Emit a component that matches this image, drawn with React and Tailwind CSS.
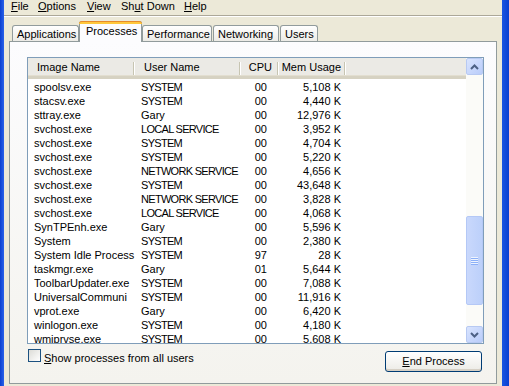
import React from "react";

const rows = [
  ["spoolsv.exe", "SYSTEM", "00", "5,108 K"],
  ["stacsv.exe", "SYSTEM", "00", "4,440 K"],
  ["sttray.exe", "Gary", "00", "12,976 K"],
  ["svchost.exe", "LOCAL SERVICE", "00", "3,952 K"],
  ["svchost.exe", "SYSTEM", "00", "4,704 K"],
  ["svchost.exe", "SYSTEM", "00", "5,220 K"],
  ["svchost.exe", "NETWORK SERVICE", "00", "4,656 K"],
  ["svchost.exe", "SYSTEM", "00", "43,648 K"],
  ["svchost.exe", "NETWORK SERVICE", "00", "3,828 K"],
  ["svchost.exe", "LOCAL SERVICE", "00", "4,068 K"],
  ["SynTPEnh.exe", "Gary", "00", "5,596 K"],
  ["System", "SYSTEM", "00", "2,380 K"],
  ["System Idle Process", "SYSTEM", "97", "28 K"],
  ["taskmgr.exe", "Gary", "01", "5,644 K"],
  ["ToolbarUpdater.exe", "SYSTEM", "00", "7,088 K"],
  ["UniversalCommuni", "SYSTEM", "00", "11,916 K"],
  ["vprot.exe", "Gary", "00", "6,420 K"],
  ["winlogon.exe", "SYSTEM", "00", "4,180 K"],
  ["wmiprvse.exe", "SYSTEM", "00", "5,608 K"],
];

const font = { fontFamily: '"Liberation Sans", Arial, sans-serif' };

const MenuItem = ({ u, rest, pre = "", w }) => (
  <span className={`${w} shrink-0 whitespace-nowrap`}>
    {pre}
    <span className="underline underline-offset-1">{u}</span>
    {rest}
  </span>
);

const Tab = ({ label, w, selected }) =>
  selected ? (
    <div
      className={`relative z-10 -mb-px h-[21px] ${w} rounded-t-[3px] border border-b-0 border-[#919B9C] bg-[#FCFCFE] flex flex-col`}
    >
      <div className="h-[3px] -mx-px -mt-px rounded-t-[3px] bg-[#FFC83C] border-t border-[#E68B2C]" />
      <div className="flex-1 pl-[6px] leading-[15px]">{label}</div>
    </div>
  ) : (
    <div
      className={`h-[16px] ${w} rounded-t-[3px] border border-b-0 border-[#919B9C] bg-gradient-to-b from-white to-[#ECEBE6] pl-[4px] leading-[16px]`}
    >
      {label}
    </div>
  );

const Chevron = ({ up }) => (
  <svg width="9" height="6" viewBox="0 0 9 6">
    <path
      d={up ? "M1 5 L4.5 1.5 L8 5" : "M1 1 L4.5 4.5 L8 1"}
      stroke="#4D6185"
      strokeWidth="2"
      fill="none"
    />
  </svg>
);

const ScrollBtn = ({ up }) => (
  <div className="h-[17px] w-[17px] rounded-[2px] border border-[#B7C9F2] bg-gradient-to-br from-[#D9E4FE] to-[#B9CCFA] flex items-center justify-center">
    <Chevron up={up} />
  </div>
);

const HeaderCell = ({ w, children, right, pad }) => (
  <div className={`relative h-full ${w} ${pad} flex items-center ${right ? "justify-end" : ""}`}>
    {children}
    <div className="absolute right-0 top-[4px] h-[13px] w-[2px] border-l border-[#C7C5B2] bg-white" />
  </div>
);

export default function App() {
  return (
    <div className="w-[509px] h-[386px] flex overflow-hidden text-[11px] text-black" style={font}>
      <div className="w-[4px] bg-gradient-to-r from-[#0A3FD0] to-[#2A62EA]" />
      <div className="flex-1 bg-[#ECE9D8] flex flex-col">
        {/* menu */}
        <div className="h-[15px] flex items-start pl-[7px] leading-[12px]">
          <MenuItem u="F" rest="ile" w="w-[27px]" />
          <MenuItem u="O" rest="ptions" w="w-[49px]" />
          <MenuItem u="V" rest="iew" w="w-[34px]" />
          <MenuItem pre="Sh" u="u" rest="t Down" w="w-[63px]" />
          <MenuItem u="H" rest="elp" w="w-[30px]" />
        </div>
        <div className="h-px bg-[#ACA899]" />
        <div className="h-px bg-white" />
        {/* tabs */}
        <div className="pl-[5px] pr-[5px] pt-[4px] flex flex-col">
          <div className="h-[20px] flex items-end pl-[3px]">
            <Tab label="Applications" w="w-[67px]" />
            <Tab label="Processes" w="w-[63px]" selected />
            <Tab label="Performance" w="w-[70px]" />
            <div className="w-[1px]" />
            <Tab label="Networking" w="w-[66px]" />
            <div className="w-[1px]" />
            <Tab label="Users" w="w-[38px]" />
          </div>
          <div className="w-[488px] h-[343px] border border-[#919B9C] bg-gradient-to-b from-[#FCFCFE] to-[#F4F3EE] pl-[17px] pr-[12px] pt-[15px] flex flex-col">
            {/* list view */}
            <div className="h-[287px] border border-[#7F9DB9] bg-white flex">
              <div className="flex-1 flex flex-col overflow-hidden">
                <div className="h-[21px] shrink-0 flex bg-[#EBEAE5] border-b-[3px] border-[#D6D2C2] shadow-[inset_0_-1px_0_#E2DED0]">
                  <HeaderCell w="w-[107px]" pad="pl-[9px]">Image Name</HeaderCell>
                  <HeaderCell w="w-[106px]" pad="pl-[9px]">User Name</HeaderCell>
                  <HeaderCell w="w-[38px]" pad="pr-[7px]" right>CPU</HeaderCell>
                  <HeaderCell w="w-[67px]" pad="pr-[5px]" right>Mem Usage</HeaderCell>
                  <div className="flex-1" />
                </div>
                <div className="pt-px">
                  {rows.map((r, i) => (
                    <div key={i} className="h-[14px] flex items-center leading-[14px] whitespace-nowrap">
                      <div className="w-[107px] pl-[6px] overflow-hidden">{r[0]}</div>
                      <div
                        className={`w-[106px] pl-[6px] overflow-hidden ${
                          r[1] === r[1].toUpperCase() ? "tracking-[-0.7px]" : ""
                        }`}
                      >
                        {r[1]}
                      </div>
                      <div className="w-[38px] pr-[12px] text-right">{r[2]}</div>
                      <div className="w-[67px] pr-[5px] text-right">{r[3]}</div>
                    </div>
                  ))}
                </div>
              </div>
              {/* scrollbar */}
              <div className="w-[17px] bg-[#FBFBF8] flex flex-col">
                <ScrollBtn up />
                <div className="flex-1 flex flex-col pt-[141px] pb-[19px]">
                  <div className="h-[89px] rounded-[2px] border border-[#B4C8F6] bg-gradient-to-r from-[#C9D8FC] to-[#BCD0FA] flex flex-col items-center justify-center gap-[1px]">
                    <div className="w-[7px] h-px bg-[#EEF4FE] shadow-[0_1px_0_#8CB0F8]" />
                    <div className="w-[7px] h-px bg-[#EEF4FE] shadow-[0_1px_0_#8CB0F8]" />
                    <div className="w-[7px] h-px bg-[#EEF4FE] shadow-[0_1px_0_#8CB0F8]" />
                    <div className="w-[7px] h-px bg-[#EEF4FE] shadow-[0_1px_0_#8CB0F8]" />
                  </div>
                </div>
                <ScrollBtn />
              </div>
            </div>
            {/* bottom row */}
            <div className="flex items-start mt-[4px]">
              <div className="mt-px ml-px w-[13px] h-[13px] border border-[#1C5180] bg-gradient-to-br from-[#DCDCD7] to-white" />
              <div className="ml-[3px] pt-[2px] leading-[16px]">
                <span className="underline underline-offset-1">S</span>how processes from all users
              </div>
              <div className="flex-1" />
              <div className="mt-[3px] mr-[2px] w-[97px] h-[21px] rounded-[3px] border border-[#003C74] bg-gradient-to-b from-white to-[#ECEBE6] flex items-center justify-center shadow-[inset_0_-2px_0_#D6D0C5]">
                <span>
                  <span className="underline underline-offset-1">E</span>nd Process
                </span>
              </div>
            </div>
          </div>
        </div>
      </div>
      <div className="w-[7px] bg-gradient-to-r from-[#1A55E2] to-[#0A3FD0]" />
    </div>
  );
}
